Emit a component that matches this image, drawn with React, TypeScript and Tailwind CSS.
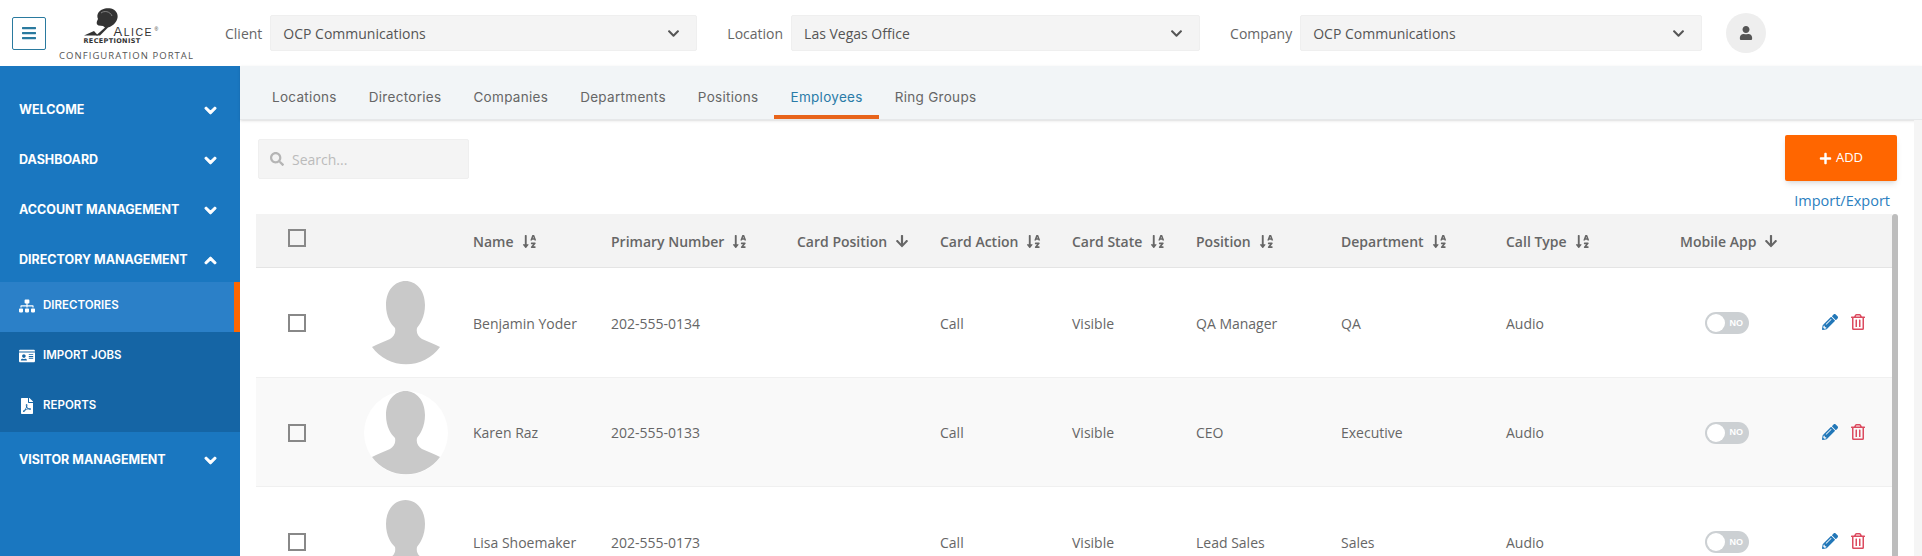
import {
  FaArrowDown,
  FaBars,
  FaChevronDown,
  FaChevronUp,
  FaFilePdf,
  FaIdCard,
  FaPencilAlt,
  FaPlus,
  FaRegTrashAlt,
  FaSearch,
  FaSitemap,
  FaSortAlphaDown,
  FaUser
} from 'react-icons/fa';

const employees = [
  { name: 'Benjamin Yoder', phone: '202-555-0134', position: 'QA Manager', department: 'QA' },
  { name: 'Karen Raz', phone: '202-555-0133', position: 'CEO', department: 'Executive' },
  { name: 'Lisa Shoemaker', phone: '202-555-0173', position: 'Lead Sales', department: 'Sales' }
];

const columns = [
  { label: 'Name', arrow: false },
  { label: 'Primary Number', arrow: false },
  { label: 'Card Position', arrow: true },
  { label: 'Card Action', arrow: false },
  { label: 'Card State', arrow: false },
  { label: 'Position', arrow: false },
  { label: 'Department', arrow: false },
  { label: 'Call Type', arrow: false },
  { label: 'Mobile App', arrow: true }
];

const tabs = ['Locations', 'Directories', 'Companies', 'Departments', 'Positions', 'Employees', 'Ring Groups'];

const gridCols = 'grid grid-cols-[217px_138px_186px_143px_132px_124px_145px_165px_174px_142px_70px]';

function Logo() {
  return (
    <div className="ml-[15px] flex w-[131px] flex-col items-center">
      <div className="relative h-[42px] w-[86px]">
        <svg viewBox="0 0 86 42" className="absolute left-0 top-0 h-[42px] w-[86px]">
          <path d="M0 30.5 L10 26 L14 30.5 Z" fill="#333333" />
          <path
            d="M16 30.5 L24 22.5 C30 21 34.5 15 33.5 10 C32.5 4 26 2.5 21 3.5 C15 5 12 9 14 14 C13 16 11.5 19 14.5 20.5 L19 21 L21 22.5 L12 30.5 Z"
            fill="#333333"
          />
          <path d="M17 8 C20 5.5 26 6 28 11" fill="none" stroke="#a0a0a0" strokeWidth="0.7" />
        </svg>
        <span className="absolute left-[30px] top-[21px] font-['Liberation_Sans',sans-serif] text-[10.5px] leading-[11px] tracking-[1.5px] text-[#333]">
          <span className="text-[13px]">A</span>LICE
        </span>
        <span className="absolute left-[71px] top-[22px] font-['Liberation_Sans',sans-serif] text-[5px] leading-[5px] text-[#333]">®</span>
        <span className="absolute left-0 top-[33px] whitespace-nowrap font-['DejaVu_Sans',sans-serif] text-[6.5px] font-bold leading-[7px] tracking-[0.35px] text-[#333]">
          RECEPTIONIST
        </span>
      </div>
      <span className="mt-[3px] whitespace-nowrap font-['Open_Sans',sans-serif] text-[9.5px] leading-[12px] tracking-[1.05px] text-[#555]">
        CONFIGURATION PORTAL
      </span>
    </div>
  );
}

function SelectField({ label, value, gapClass, widthClass }: { label: string; value: string; gapClass: string; widthClass: string }) {
  return (
    <div className={`flex items-center ${gapClass}`}>
      <span className="text-[14px] text-[#666]">{label}</span>
      <div className={`ml-2 flex h-[36px] items-center justify-between rounded-[2px] border border-[#efefef] bg-[#f4f4f4] pl-[12px] pr-[16px] ${widthClass}`}>
        <span className="text-[14px] text-[#555]">{value}</span>
        <FaChevronDown className="text-[13px] text-[#555]" />
      </div>
    </div>
  );
}

function NavItem({ label, open }: { label: string; open?: boolean }) {
  const chevron = 'text-[13px] stroke-current [stroke-width:40px]';
  return (
    <div className="flex h-[50px] items-center justify-between pl-[19px] pr-[23px] font-['Inter',sans-serif] text-[12.5px] font-bold text-white">
      <span>{label}</span>
      {open ? <FaChevronUp className={chevron} /> : <FaChevronDown className={chevron} />}
    </div>
  );
}

function SubItem({ label, icon, active }: { label: string; icon: React.ReactNode; active?: boolean }) {
  return (
    <div
      className={`flex h-[50px] items-center pb-[3px] font-['Inter',sans-serif] text-[11.5px] font-semibold text-white ${
        active ? 'border-r-[6px] border-[#ff6600] bg-[#2b80c8]' : ''
      }`}
    >
      <span className="flex w-[43px] justify-center pl-[10px] text-[16px]">{icon}</span>
      <span>{label}</span>
    </div>
  );
}

function Sidebar() {
  return (
    <aside className="w-[240px] shrink-0 bg-[#1a77c0] pt-[19px]">
      <NavItem label="WELCOME" />
      <NavItem label="DASHBOARD" />
      <NavItem label="ACCOUNT MANAGEMENT" />
      <div className="-mb-[3px]">
        <NavItem label="DIRECTORY MANAGEMENT" open />
      </div>
      <div className="relative">
        <SubItem label="DIRECTORIES" icon={<FaSitemap />} active />
        <div className="bg-[#1565a5]">
          <SubItem label="IMPORT JOBS" icon={<FaIdCard />} />
          <SubItem label="REPORTS" icon={<FaFilePdf />} />
        </div>
      </div>
      <div className="mt-[3px]">
        <NavItem label="VISITOR MANAGEMENT" />
      </div>
    </aside>
  );
}

function Avatar({ shaded }: { shaded: boolean }) {
  return (
    <svg viewBox="0 0 84 84" className="h-[84px] w-[84px]">
      {shaded && <circle cx="42" cy="42" r="42" fill="#ffffff" />}
      <path
        d="M41.5 0 C52 0 61 9 61 24 C61 36 56 43 53 47 C52 52 54 55 58 58 C64 61 71 63 76 66 A42 42 0 0 1 8 66 C13 63 20 61 26 58 C30 55 32 52 31 47 C27 43 22 36 22 24 C22 9 31 0 41.5 0 Z"
        fill="#c9c9c9"
      />
    </svg>
  );
}

function Checkbox() {
  return <div className="h-[18px] w-[18px] border-2 border-[#888]" />;
}

function Toggle() {
  return (
    <div className="ml-[25px] flex h-[22px] w-[44px] items-center justify-between rounded-full bg-[#ccd0d3] pl-[2px] pr-[6px]">
      <div className="h-[18px] w-[18px] rounded-full bg-white" />
      <span className="font-['Liberation_Sans',sans-serif] text-[9px] font-bold text-white">NO</span>
    </div>
  );
}

function EmployeeRow({ employee, index }: { employee: (typeof employees)[number]; index: number }) {
  const shaded = index % 2 === 1;
  return (
    <div className={`${gridCols} h-[109.5px] items-center border-b border-[#f0f0f0] pt-[2px] text-[14px] text-[#666] ${shaded ? 'bg-[#f9f9f9]' : 'bg-white'}`}>
      <div className="flex items-center">
        <div className="ml-[32px] w-[76px]">
          <Checkbox />
        </div>
        <Avatar shaded={shaded} />
      </div>
      <span>{employee.name}</span>
      <span>{employee.phone}</span>
      <span />
      <span>Call</span>
      <span>Visible</span>
      <span>{employee.position}</span>
      <span>{employee.department}</span>
      <span>Audio</span>
      <Toggle />
      <div className="mb-[2px] flex items-center gap-[12px]">
        <FaPencilAlt className="text-[16px] text-[#2277b8]" />
        <FaRegTrashAlt className="text-[16px] text-[#dc4a5f]" />
      </div>
    </div>
  );
}

export default function App() {
  return (
    <div className="flex h-[556px] w-[1922px] flex-col overflow-hidden bg-white font-['Open_Sans',sans-serif]">
      <header className="flex h-[66px] shrink-0 items-center">
        <button className="ml-[12px] flex h-[33px] w-[34px] items-center justify-center rounded-[2px] border border-[#2a7a9f] text-[16px] text-[#2a7a9f]">
          <FaBars />
        </button>
        <Logo />
        <div className="ml-[33px] flex items-center">
          <SelectField label="Client" value="OCP Communications" gapClass="" widthClass="w-[427px]" />
          <SelectField label="Location" value="Las Vegas Office" gapClass="ml-[30px]" widthClass="w-[409px]" />
          <SelectField label="Company" value="OCP Communications" gapClass="ml-[30px]" widthClass="w-[402px]" />
          <div className="ml-[24px] flex h-[40px] w-[40px] items-center justify-center rounded-full bg-[#eeeeee] text-[14px] text-[#555]">
            <FaUser />
          </div>
        </div>
      </header>
      <div className="flex min-h-0 flex-1">
        <Sidebar />
        <main className="flex min-w-0 flex-1 flex-col">
          <nav className="flex h-[54px] shrink-0 border-b border-[#e6e8ea] bg-[#f2f5f7] pl-[16px] shadow-sm">
            {tabs.map(tab => (
              <div
                key={tab}
                className={`flex items-center border-b-4 px-[16px] pt-[14px] font-['Inter',sans-serif] text-[13.5px] tracking-[0.3px] ${
                  tab === 'Employees' ? 'border-[#e8641b] text-[#2a7ba8]' : 'border-transparent text-[#666]'
                }`}
              >
                {tab}
              </div>
            ))}
          </nav>
          <div className="flex min-h-0 flex-1">
            <div className="min-w-0 flex-1 pl-[16px]">
              <div className="flex items-start justify-between pl-[2px] pr-[1px] pt-[15px]">
                <div className="mt-[4px] flex h-[40px] w-[211px] items-center gap-[8px] rounded-[2px] border border-[#efefef] bg-[#f4f4f4] px-[11px] text-[14px] text-[#bbbbbb]">
                  <FaSearch className="text-[14px] text-[#b5b5b5]" />
                  <span>Search...</span>
                </div>
                <button className="flex h-[46px] w-[112px] items-center justify-center gap-[4px] rounded-[2px] bg-[#ff6600] text-[13px] text-white shadow-md">
                  <FaPlus className="text-[13px]" />
                  ADD
                </button>
              </div>
              <div className="flex justify-end pr-[8px] pt-[10px] text-[14.5px] leading-[20px] text-[#2b80c0]">Import/Export</div>
              <div className="mt-[3px] flex">
                <div className="min-w-0 flex-1">
                  <div className={`${gridCols} h-[54px] items-center border-b border-[#e4e4e4] bg-[#f3f3f3] pt-[1px] text-[14px] font-semibold text-[#666]`}>
                    <div className="mb-[6px] ml-[32px]">
                      <Checkbox />
                    </div>
                    {columns.map(column => (
                      <div key={column.label} className="flex items-center gap-[8px] whitespace-nowrap">
                        <span>{column.label}</span>
                        {column.arrow ? <FaArrowDown className="text-[14px]" /> : <FaSortAlphaDown className="text-[15px]" />}
                      </div>
                    ))}
                    <span />
                  </div>
                  {employees.map((employee, index) => (
                    <EmployeeRow key={employee.name} employee={employee} index={index} />
                  ))}
                </div>
                <div className="h-[400px] w-[6px] shrink-0 rounded-t-[3px] bg-[#bdbdbd]" />
              </div>
            </div>
            <div className="ml-[16px] w-[8px] shrink-0 bg-[#f5f5f5]" />
          </div>
        </main>
      </div>
    </div>
  );
}
